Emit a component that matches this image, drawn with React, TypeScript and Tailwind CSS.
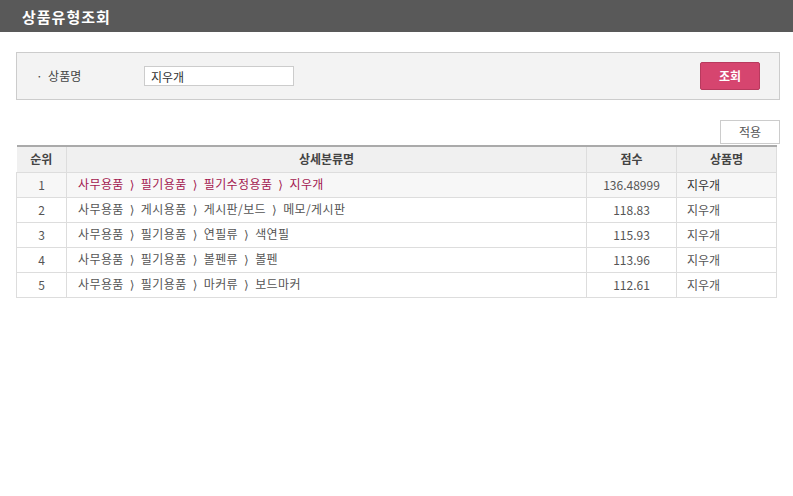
const rows = [
  { rank: 1, path: ["사무용품", "필기용품", "필기수정용품", "지우개"], score: "136.48999", name: "지우개", active: true },
  { rank: 2, path: ["사무용품", "게시용품", "게시판/보드", "메모/게시판"], score: "118.83", name: "지우개" },
  { rank: 3, path: ["사무용품", "필기용품", "연필류", "색연필"], score: "115.93", name: "지우개" },
  { rank: 4, path: ["사무용품", "필기용품", "볼펜류", "볼펜"], score: "113.96", name: "지우개" },
  { rank: 5, path: ["사무용품", "필기용품", "마커류", "보드마커"], score: "112.61", name: "지우개" },
];

function Path({ parts }: { parts: string[] }) {
  return (
    <>
      {parts.map((p, i) => (
        <span key={i}>
          {i > 0 && <span className="font-['DejaVu_Sans'] mx-[6px]">⟩</span>}
          {p}
        </span>
      ))}
    </>
  );
}

export default function App() {
  return (
    <div className="w-[793px] h-[496px] bg-white text-[12px] text-[#333] font-['Noto_Sans_CJK_KR','Liberation_Sans',sans-serif]">
      <div className="h-8 bg-[#595959] flex items-center pl-[22px]">
        <h1 className="text-white text-[15px] font-bold leading-none tracking-[1px]">상품유형조회</h1>
      </div>

      <div className="pl-4 pt-5">
        <div className="w-[764px] h-12 bg-[#f3f3f3] border border-[#cccccc] flex items-center pl-[19px] pr-[19px]">
          <span className="w-[108px] text-[#444]">· &nbsp;상품명</span>
          <input
            defaultValue="지우개"
            className="w-[150px] h-5 bg-white border border-[#cccccc] px-[6px] text-[12px] text-[#333] outline-none"
          />
          <button className="ml-auto w-[60px] h-7 rounded-[2px] bg-[#d6456f] border border-[#b83a5e] text-white font-bold text-[12px]">
            조회
          </button>
        </div>

        <div className="w-[764px] flex justify-end mt-5">
          <button className="w-[60px] h-6 bg-white border border-[#cccccc] text-[#555] text-[12px]">적용</button>
        </div>

        <table className="w-[761px] mt-[1px] border-collapse border-t-2 border-t-[#aaaaaa]">
          <thead>
            <tr className="h-[26px] bg-[#f0f0f0] text-[#444]">
              <th className="w-[50px] border-b border-r border-[#dddddd] font-bold">순위</th>
              <th className="w-[520px] border-b border-r border-[#dddddd] font-bold">상세분류명</th>
              <th className="w-[90px] border-b border-r border-[#dddddd] font-bold">점수</th>
              <th className="border-b border-r border-[#dddddd] font-bold">상품명</th>
            </tr>
          </thead>
          <tbody>
            {rows.map((r) => (
              <tr key={r.rank} className={r.active ? "h-[25px] bg-[#f7f7f7]" : "h-[25px]"}>
                <td className="border-b border-r border-l border-[#dddddd] text-center text-[#555]">{r.rank}</td>
                <td className={r.active ? "border-b border-r border-[#dddddd] pl-[11px] tracking-[0.4px] text-[#a3174f]" : "border-b border-r border-[#dddddd] pl-[11px] tracking-[0.4px] text-[#555]"}>
                  <Path parts={r.path} />
                </td>
                <td className="border-b border-r border-[#dddddd] text-center text-[#555]">{r.score}</td>
                <td className={r.active ? "border-b border-r border-[#dddddd] pl-[10px] text-[#333]" : "border-b border-r border-[#dddddd] pl-[10px] text-[#555]"}>
                  {r.name}
                </td>
              </tr>
            ))}
          </tbody>
        </table>
      </div>
    </div>
  );
}
